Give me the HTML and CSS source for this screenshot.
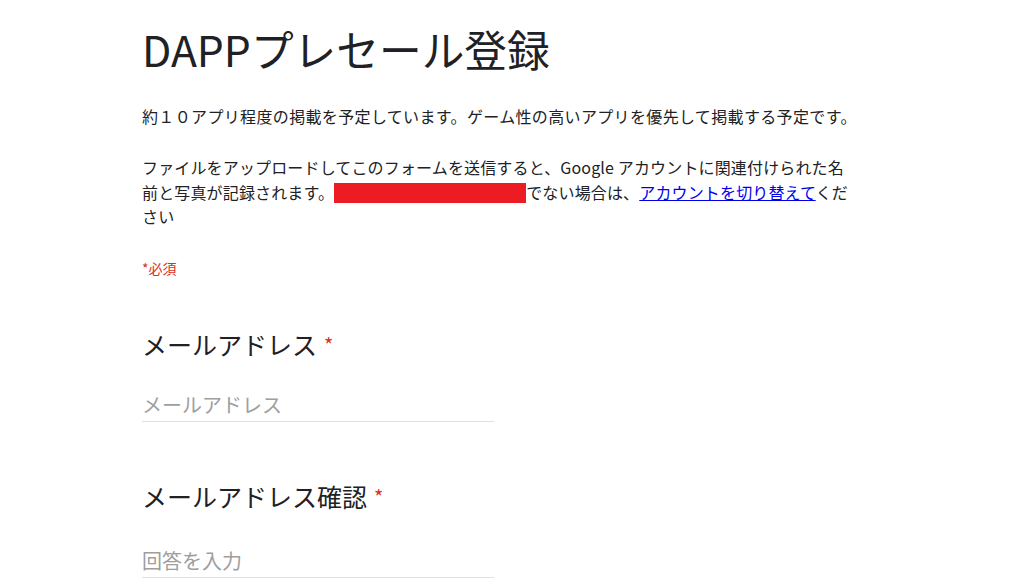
FILE: index.html
```html
<!DOCTYPE html>
<html lang="ja">
<head>
<meta charset="utf-8">
<title>DAPPプレセール登録</title>
<link rel="stylesheet" href="styles.css">
</head>
<body>
<main class="form">
  <h1 class="title">DAPPプレセール登録</h1>
  <p class="desc">約１０アプリ程度の掲載を予定しています。ゲーム性の高いアプリを優先して掲載する予定です。</p>
  <p class="desc notice">ファイルをアップロードしてこのフォームを送信すると、Google アカウントに関連付けられた名前と写真が記録されます。<span class="redact"></span>でない場合は、<a class="link" href="#">アカウントを切り替えて</a>ください</p>
  <div class="required-note">*必須</div>

  <section class="question">
    <div class="q-title">メールアドレス<span class="star">*</span></div>
    <div class="input"><span class="placeholder">メールアドレス</span></div>
  </section>

  <section class="question">
    <div class="q-title">メールアドレス確認<span class="star">*</span></div>
    <div class="input"><span class="placeholder">回答を入力</span></div>
  </section>
</main>
</body>
</html>
```

FILE: styles.css
```css
html, body {
  margin: 0;
  padding: 0;
  background: #ffffff;
}

body {
  font-family: "Noto Sans CJK JP", "Noto Sans", sans-serif;
  color: #202124;
}

.form {
  padding: 22px 0 0 142px;
  width: 720px;
}

.title {
  margin: 0;
  font-size: 42.7px;
  font-weight: 400;
  line-height: 52px;
  color: #202124;
}

.desc {
  margin: 30px 0 0;
  font-size: 16px;
  line-height: 24.5px;
  letter-spacing: 0.35px;
}

.notice {
  margin-top: 26.5px;
  letter-spacing: 0.15px;
  max-width: 712px;
}

.redact {
  display: inline-block;
  width: 192px;
  height: 20px;
  background: #ed1c24;
  vertical-align: -4px;
}

.link {
  color: #0000ee;
  text-decoration: underline;
}

.required-note {
  margin-top: 29px;
  font-size: 14px;
  line-height: 20px;
  color: #d93025;
}

.question {
  margin-top: 49px;
}

.question + .question {
  margin-top: 57px;
}

.q-title {
  font-size: 25px;
  line-height: 34px;
  color: #202124;
}

.star {
  color: #d93025;
  font-size: 20px;
  margin-left: 7px;
  vertical-align: 2px;
}

.input {
  margin-top: 28px;
  width: 352px;
  border-bottom: 1px solid #e0e0e0;
  padding-bottom: 1px;
}

.question + .question .input {
  margin-top: 32px;
}

.placeholder {
  font-size: 20px;
  line-height: 30px;
  color: #9e9e9e;
}
```
